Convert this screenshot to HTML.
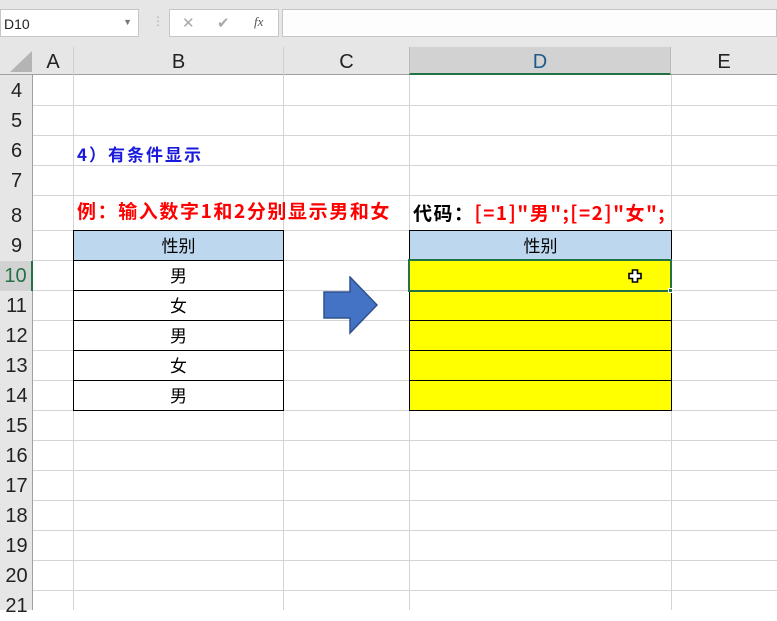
<!DOCTYPE html><html><head><meta charset="utf-8"><style>
body{margin:0;width:777px;height:610px;overflow:hidden;background:#fff;position:relative;font-family:"Liberation Sans","Noto Sans CJK SC",sans-serif}
div{position:absolute;box-sizing:border-box}
.hl{left:0;width:777px;height:1px;background:#d4d4d4}
.vl{top:75px;width:1px;height:535px;background:#d4d4d4}
.rh{left:0;width:33px;font-size:20px;color:#222;text-align:center;line-height:30px}
.ch{top:47px;height:28px;font-size:20px;color:#222;text-align:center;line-height:30px}
.c{font-size:17px;text-align:center;color:#000;border:1px solid #000;font-family:"Noto Sans CJK SC",sans-serif}
</style></head><body>
<div style="left:0;top:0;width:777px;height:47px;background:#e6e6e6"></div>
<div style="left:0;top:9px;width:139px;height:28px;background:#fff;border:1px solid #c6c6c6;font-size:14px;padding:6px 3px;color:#222">D10<span style="position:absolute;right:6px;top:7px;font-size:9px;color:#777">▼</span></div>
<div style="left:152px;top:14px;color:#aaa;font-size:12px">⋮</div>
<div style="left:169px;top:9px;width:110px;height:28px;background:#fff;border:1px solid #c6c6c6;color:#aaa;font-size:15px"><span style="position:absolute;left:12px;top:4px">✕</span><span style="position:absolute;left:47px;top:4px">✔</span><span style="position:absolute;left:84px;top:4px;font-style:italic;font-family:'Liberation Serif';color:#555;font-size:13px">fx</span></div>
<div style="left:282px;top:9px;width:495px;height:28px;background:#fdfdfd;border:1px solid #c6c6c6"></div>
<div style="left:0;top:47px;width:777px;height:28px;background:#e6e6e6;border-bottom:1px solid #a0a0a0"></div>
<svg style="position:absolute;left:8px;top:51px" width="24" height="22"><polygon points="24,0 24,21 2,21" fill="#b4b4b4"/></svg>
<div class="ch" style="left:33px;width:40px">A</div>
<div class="ch" style="left:73px;width:210px;border-left:1px solid #d0d0d0">B</div>
<div class="ch" style="left:283px;width:126px;border-left:1px solid #d0d0d0">C</div>
<div class="ch" style="left:409px;width:262px;background:#d2d2d2;border-bottom:2px solid #217346;color:#1e5a8a;border-left:1px solid #bbb;border-right:1px solid #bbb">D</div>
<div class="ch" style="left:671px;width:106px">E</div>
<div class="hl" style="top:105px"></div><div class="hl" style="top:135px"></div><div class="hl" style="top:165px"></div><div class="hl" style="top:195px"></div><div class="hl" style="top:230px"></div><div class="hl" style="top:260px"></div><div class="hl" style="top:290px"></div><div class="hl" style="top:320px"></div><div class="hl" style="top:350px"></div><div class="hl" style="top:380px"></div><div class="hl" style="top:410px"></div><div class="hl" style="top:440px"></div><div class="hl" style="top:470px"></div><div class="hl" style="top:500px"></div><div class="hl" style="top:530px"></div><div class="hl" style="top:560px"></div><div class="hl" style="top:590px"></div>
<div class="vl" style="left:73px"></div><div class="vl" style="left:283px"></div><div class="vl" style="left:409px"></div><div class="vl" style="left:671px"></div>
<div style="left:0;top:75px;width:33px;height:535px;background:#e6e6e6;border-right:1px solid #a0a0a0"></div>
<div class="rh" style="top:76px">4</div><div class="rh" style="top:106px">5</div><div class="rh" style="top:136px">6</div><div class="rh" style="top:166px">7</div><div class="rh" style="top:200px;line-height:32px">8</div><div class="rh" style="top:231px">9</div>
<div class="rh" style="top:261px;background:#d2d2d2;border-right:2px solid #217346;color:#217346">10</div>
<div class="rh" style="top:291px">11</div><div class="rh" style="top:321px">12</div><div class="rh" style="top:351px">13</div><div class="rh" style="top:381px">14</div><div class="rh" style="top:411px">15</div><div class="rh" style="top:441px">16</div><div class="rh" style="top:471px">17</div><div class="rh" style="top:501px">18</div><div class="rh" style="top:531px">19</div><div class="rh" style="top:561px">20</div><div class="rh" style="top:591px">21</div>
<div style="left:77px;top:141px;color:#1a1adc;font-size:17px;letter-spacing:2px;font-weight:bold;font-family:'Noto Sans CJK SC',sans-serif;white-space:nowrap">4）有条件显示</div>
<div style="left:77px;top:197px;color:#f00;font-size:19px;font-weight:bold;font-family:'Noto Sans CJK SC',sans-serif;letter-spacing:1.6px;white-space:nowrap">例：输入数字1和2分别显示男和女</div>
<div style="left:413px;top:199px;font-size:19px;font-weight:bold;font-family:'Noto Sans CJK SC',sans-serif;white-space:nowrap;letter-spacing:1.5px">代码：<span style="color:#f00">[=1]"男";[=2]"女";</span></div>
<div class="c" style="left:73px;top:230px;width:211px;height:31px;background:#bdd7ee;line-height:28px">性别</div>
<div class="c" style="left:73px;top:260px;width:211px;height:31px;line-height:28px">男</div>
<div class="c" style="left:73px;top:290px;width:211px;height:31px;line-height:28px">女</div>
<div class="c" style="left:73px;top:320px;width:211px;height:31px;line-height:28px">男</div>
<div class="c" style="left:73px;top:350px;width:211px;height:31px;line-height:28px">女</div>
<div class="c" style="left:73px;top:380px;width:211px;height:31px;line-height:28px">男</div>
<div class="c" style="left:409px;top:230px;width:263px;height:31px;background:#bdd7ee;line-height:28px">性别</div>
<div class="c" style="left:409px;top:260px;width:263px;height:31px;background:#ff0"></div>
<div class="c" style="left:409px;top:290px;width:263px;height:31px;background:#ff0"></div>
<div class="c" style="left:409px;top:320px;width:263px;height:31px;background:#ff0"></div>
<div class="c" style="left:409px;top:350px;width:263px;height:31px;background:#ff0"></div>
<div class="c" style="left:409px;top:380px;width:263px;height:31px;background:#ff0"></div>
<div style="left:408px;top:259px;width:264px;height:33px;border:2px solid #217346"></div>
<div style="left:668px;top:288px;width:5px;height:5px;background:#217346;border:1px solid #fff"></div>
<svg style="position:absolute;left:628px;top:269px" width="14" height="14"><path d="M4.5 1h5v3.5H13v5H9.5V13h-5V9.5H1v-5h3.5z" fill="#fff" stroke="#000" stroke-width="1.6"/></svg>
<svg style="position:absolute;left:322px;top:276px" width="58" height="60"><polygon points="2,16 28,16 28,1 55,29 28,57 28,42 2,42" fill="#4472c4" stroke="#2f528f" stroke-width="1.5"/></svg>
</body></html>
